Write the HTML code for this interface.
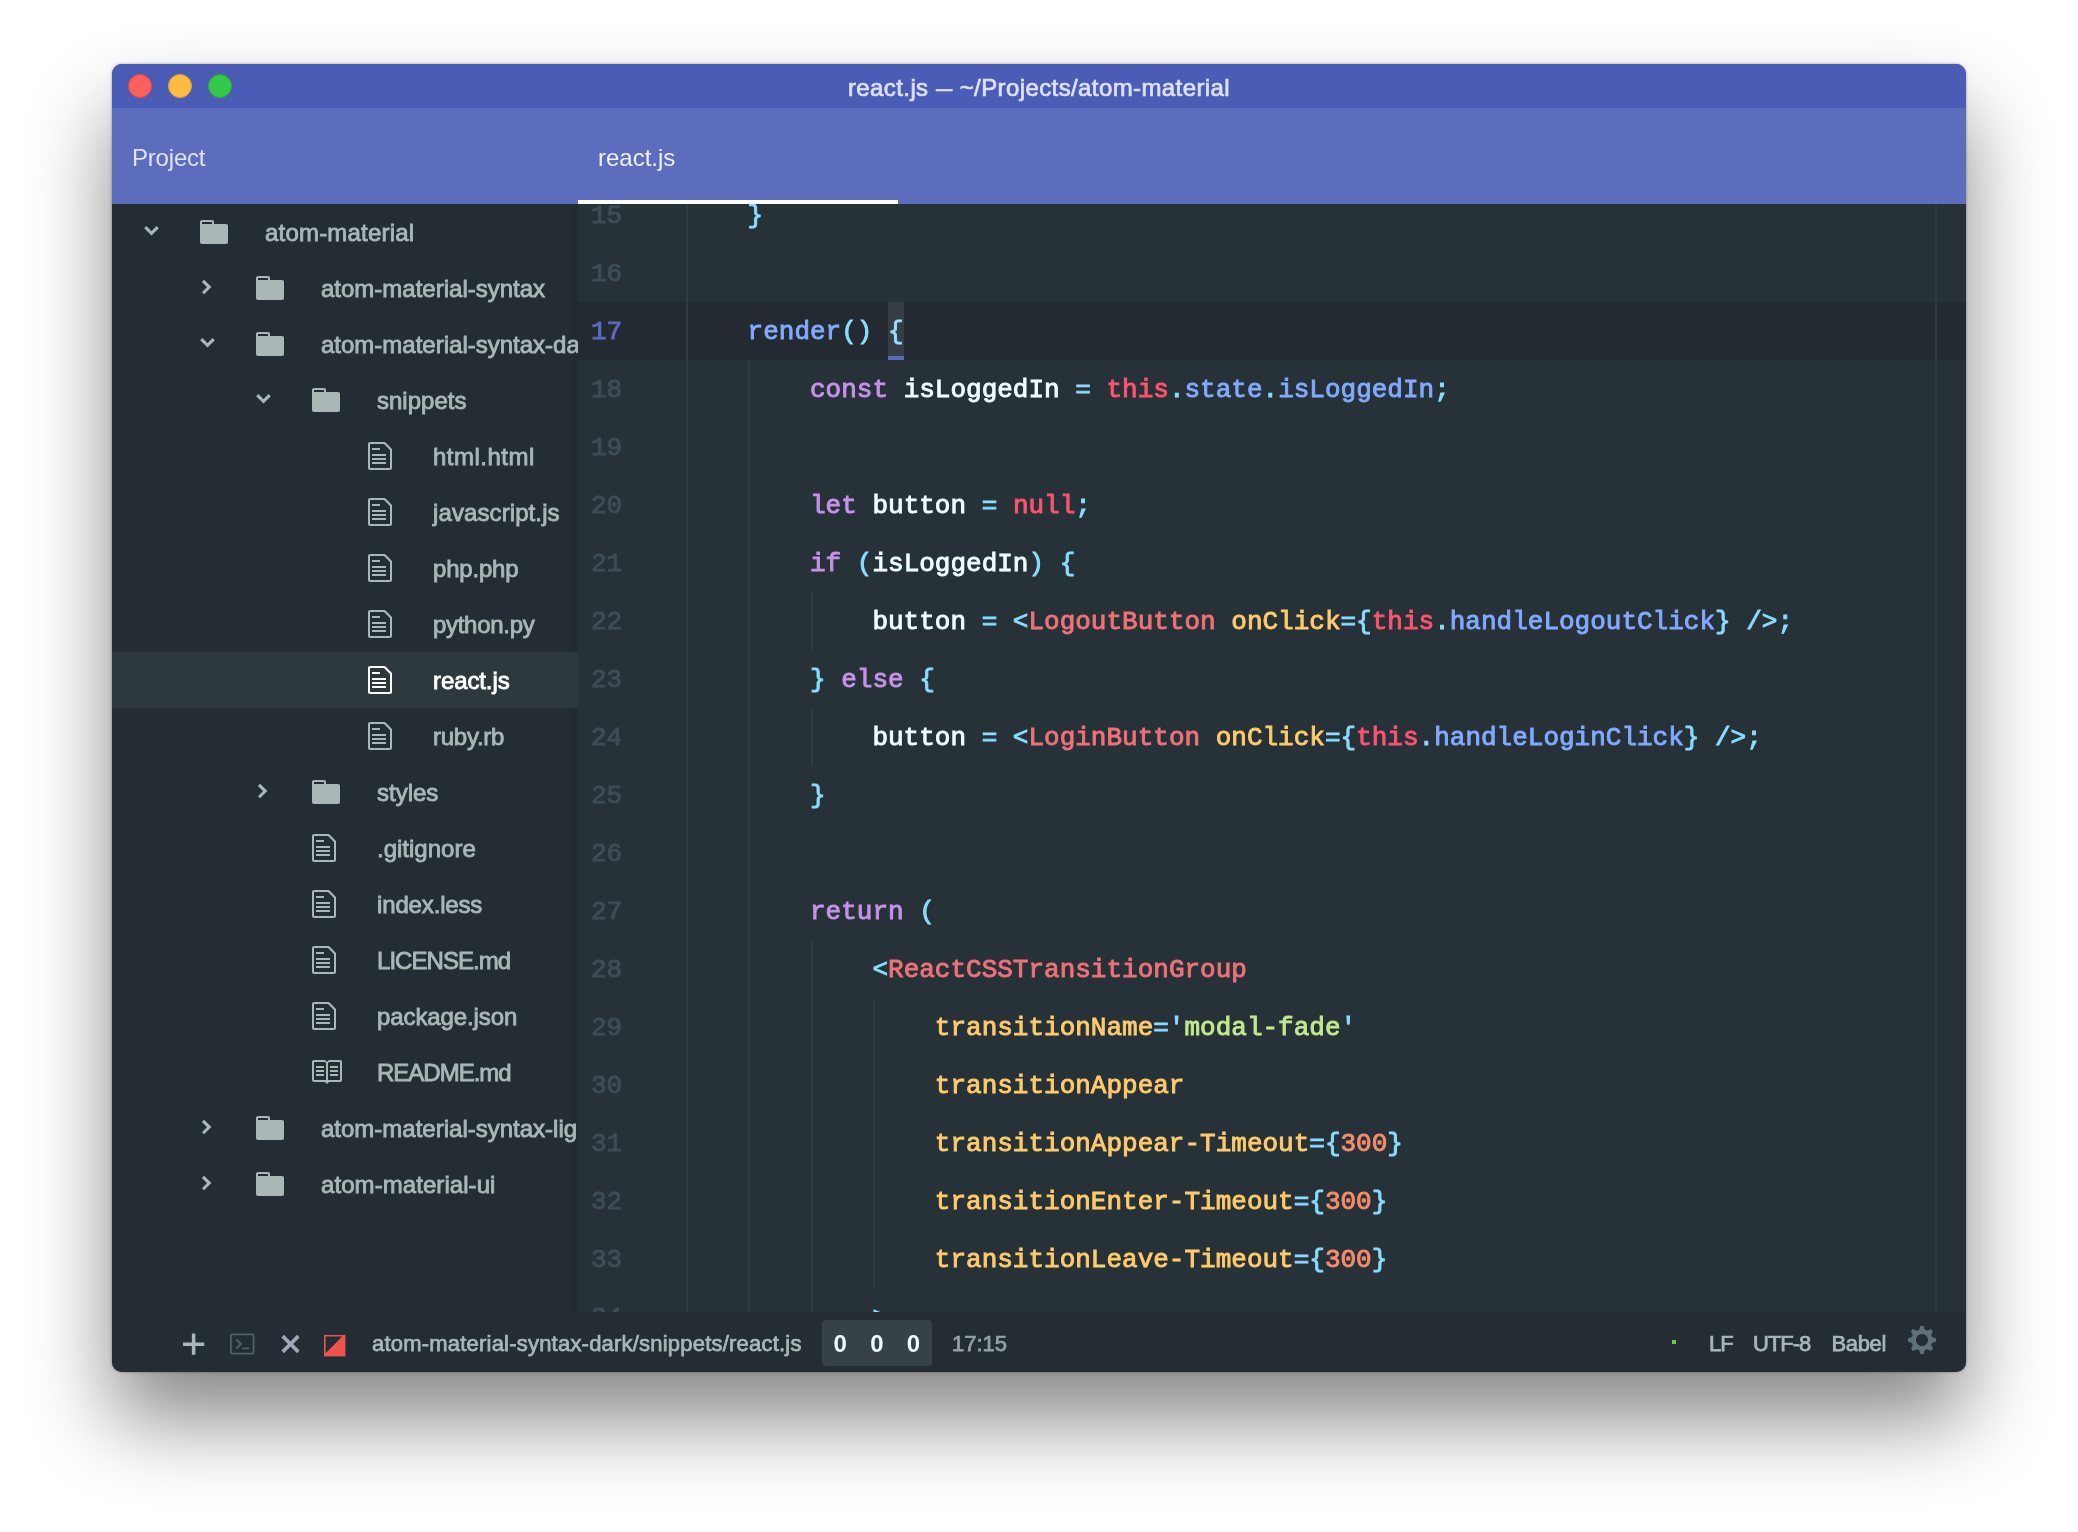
<!DOCTYPE html>
<html lang="en"><head><meta charset="utf-8"><title>react.js — ~/Projects/atom-material</title>
<style>

html,body{margin:0;padding:0;background:#fff;}
body{width:2078px;height:1532px;position:relative;overflow:hidden;font-family:"Liberation Sans",sans-serif;}
.shadow{position:absolute;left:112px;top:64px;width:1854px;height:1308px;border-radius:10px;
  box-shadow:0 0 3px rgba(0,0,0,.38),0 48px 84px rgba(0,0,0,.47);}
.win{position:absolute;left:112px;top:64px;width:1854px;height:1308px;border-radius:10px;overflow:hidden;background:#263238;will-change:transform;}
.ic{position:absolute;display:block;overflow:visible}
.abs{position:absolute;white-space:pre;}
.title{position:absolute;left:0;top:0;width:100%;height:44px;background:#4b5cb7;}
.title .t{position:absolute;left:0;width:100%;top:0;height:44px;line-height:48px;text-align:center;font-size:24px;color:#dde1f3;-webkit-text-stroke:.7px #dde1f3;letter-spacing:.4px}
.dot{position:absolute;top:10px;width:24px;height:24px;border-radius:50%;box-sizing:border-box}
.tabs{position:absolute;left:0;top:44px;width:100%;height:96px;background:#5d6dbe;}
.tabs .l{position:absolute;top:0;height:96px;line-height:100px;font-size:24px;}
.tabs .ul{position:absolute;left:466px;top:92px;width:320px;height:4px;background:#fff}
.tree{position:absolute;left:0;top:140px;width:466px;height:1108px;background:#232d33;overflow:hidden;}
.row{position:absolute;left:0;width:466px;height:56px;}
.row.sel{background:#2d393f;}
.row .n{position:absolute;top:0;height:56px;line-height:57px;font-size:24px;color:#a9b7b6;-webkit-text-stroke:.85px #a9b7b6;white-space:pre;letter-spacing:0px}
.row.sel .n{color:#fff;-webkit-text-stroke:.85px #fff}
.ed{position:absolute;left:466px;top:140px;width:1388px;height:1108px;background:#263238;overflow:hidden;}
.ln{position:absolute;left:0;width:1388px;height:58px;line-height:58px;font-family:"Liberation Mono",monospace;font-size:26px;white-space:pre;}
.ln.cur{background:#232a32;}
.ln .no{position:absolute;left:13px;top:1px;color:#3f4d56;-webkit-text-stroke:.9px}
.ln.cur .no{color:#5c6bc0}
.ln .cd{position:absolute;left:107.2px;top:1px;color:#eeffff;-webkit-text-stroke:.9px}
.g{position:absolute;width:2px;background:#2c3c44;}
.k{color:#c792ea} .p{color:#89ddff} .f{color:#82aaff} .r{color:#ff5370} .t{color:#f07178}
.a{color:#ffcb6b} .s{color:#c3e88d} .n{color:#f78c6c} .v{color:#eeffff}
.status{position:absolute;left:0;top:1248px;width:100%;height:60px;background:#232d33;}
.status .x{position:absolute;top:-2px;height:62px;line-height:67px;font-size:22px;color:#a9b7b6;-webkit-text-stroke:.75px #a9b7b6;white-space:pre}

</style></head><body>
<div class="shadow"></div>
<div class="win">
<div class="title">
<div class="dot" style="left:16px;background:#fc605c;border:1px solid #df4744"></div>
<div class="dot" style="left:56px;background:#fdbc40;border:1px solid #de9f34"></div>
<div class="dot" style="left:96px;background:#34c84a;border:1px solid #27aa35"></div>
<div class="t">react.js <span style="display:inline-block;width:17px;transform:scaleX(.68);transform-origin:0 50%">—</span> ~/Projects/atom-material</div>
</div>
<div class="tabs">
<div class="l" style="left:20px;color:#dfe2f2;letter-spacing:-.2px">Project</div>
<div class="l" style="left:486px;color:#eef0f9">react.js</div>
<div class="ul"></div>
</div>
<div class="tree">
<div class="abs" style="left:460px;top:0;width:6px;height:1108px;background:rgba(36,40,50,.55)"></div>
<div class="row" style="top:0px">
<svg class="ic" style="left:0;top:0" width="466" height="56"><polyline points="33.3,23.1 39.5,29.3 45.7,23.1" fill="none" stroke="#a9b7b6" stroke-width="3.1"/></svg>
<svg class="ic" style="left:88.00px;top:12.00px" width="28.00" height="32.00" viewBox="0 0 14 16"><path fill="#a9b7b6" fill-rule="evenodd" d="M13 4H7V3c0-.66-.31-1-1-1H1c-.55 0-1 .45-1 1v10c0 .55.45 1 1 1h12c.55 0 1-.45 1-1V5c0-.55-.45-1-1-1zM6 4H1V3h5v1z"/></svg>
<span class="n" style="left:153px;letter-spacing:0.2px">atom-material</span>
</div>
<div class="row" style="top:56px">
<svg class="ic" style="left:0;top:0" width="466" height="56"><polyline points="91.0,20.85 97.2,27.05 91.0,33.25" fill="none" stroke="#a9b7b6" stroke-width="3.1"/></svg>
<svg class="ic" style="left:144.00px;top:12.00px" width="28.00" height="32.00" viewBox="0 0 14 16"><path fill="#a9b7b6" fill-rule="evenodd" d="M13 4H7V3c0-.66-.31-1-1-1H1c-.55 0-1 .45-1 1v10c0 .55.45 1 1 1h12c.55 0 1-.45 1-1V5c0-.55-.45-1-1-1zM6 4H1V3h5v1z"/></svg>
<span class="n" style="left:209px;letter-spacing:0px">atom-material-syntax</span>
</div>
<div class="row" style="top:112px">
<svg class="ic" style="left:0;top:0" width="466" height="56"><polyline points="89.3,23.1 95.5,29.3 101.7,23.1" fill="none" stroke="#a9b7b6" stroke-width="3.1"/></svg>
<svg class="ic" style="left:144.00px;top:12.00px" width="28.00" height="32.00" viewBox="0 0 14 16"><path fill="#a9b7b6" fill-rule="evenodd" d="M13 4H7V3c0-.66-.31-1-1-1H1c-.55 0-1 .45-1 1v10c0 .55.45 1 1 1h12c.55 0 1-.45 1-1V5c0-.55-.45-1-1-1zM6 4H1V3h5v1z"/></svg>
<span class="n" style="left:209px;letter-spacing:0px">atom-material-syntax-dark</span>
</div>
<div class="row" style="top:168px">
<svg class="ic" style="left:0;top:0" width="466" height="56"><polyline points="145.3,23.1 151.5,29.3 157.7,23.1" fill="none" stroke="#a9b7b6" stroke-width="3.1"/></svg>
<svg class="ic" style="left:200.00px;top:12.00px" width="28.00" height="32.00" viewBox="0 0 14 16"><path fill="#a9b7b6" fill-rule="evenodd" d="M13 4H7V3c0-.66-.31-1-1-1H1c-.55 0-1 .45-1 1v10c0 .55.45 1 1 1h12c.55 0 1-.45 1-1V5c0-.55-.45-1-1-1zM6 4H1V3h5v1z"/></svg>
<span class="n" style="left:265px;letter-spacing:0px">snippets</span>
</div>
<div class="row" style="top:224px">
<svg class="ic" style="left:256.00px;top:12.00px" width="24.00" height="32.00" viewBox="0 0 12 16"><path fill="#a9b7b6" fill-rule="evenodd" d="M6 5H2V4h4v1zM2 8h7V7H2v1zm0 2h7V9H2v1zm0 2h7v-1H2v1zm10-7.5V14c0 .55-.45 1-1 1H1c-.55 0-1-.45-1-1V2c0-.55.45-1 1-1h7.5L12 4.5zM11 5L8 2H1v12h10V5z"/></svg>
<span class="n" style="left:321px;letter-spacing:0.5px">html.html</span>
</div>
<div class="row" style="top:280px">
<svg class="ic" style="left:256.00px;top:12.00px" width="24.00" height="32.00" viewBox="0 0 12 16"><path fill="#a9b7b6" fill-rule="evenodd" d="M6 5H2V4h4v1zM2 8h7V7H2v1zm0 2h7V9H2v1zm0 2h7v-1H2v1zm10-7.5V14c0 .55-.45 1-1 1H1c-.55 0-1-.45-1-1V2c0-.55.45-1 1-1h7.5L12 4.5zM11 5L8 2H1v12h10V5z"/></svg>
<span class="n" style="left:321px;letter-spacing:0.1px">javascript.js</span>
</div>
<div class="row" style="top:336px">
<svg class="ic" style="left:256.00px;top:12.00px" width="24.00" height="32.00" viewBox="0 0 12 16"><path fill="#a9b7b6" fill-rule="evenodd" d="M6 5H2V4h4v1zM2 8h7V7H2v1zm0 2h7V9H2v1zm0 2h7v-1H2v1zm10-7.5V14c0 .55-.45 1-1 1H1c-.55 0-1-.45-1-1V2c0-.55.45-1 1-1h7.5L12 4.5zM11 5L8 2H1v12h10V5z"/></svg>
<span class="n" style="left:321px;letter-spacing:-0.2px">php.php</span>
</div>
<div class="row" style="top:392px">
<svg class="ic" style="left:256.00px;top:12.00px" width="24.00" height="32.00" viewBox="0 0 12 16"><path fill="#a9b7b6" fill-rule="evenodd" d="M6 5H2V4h4v1zM2 8h7V7H2v1zm0 2h7V9H2v1zm0 2h7v-1H2v1zm10-7.5V14c0 .55-.45 1-1 1H1c-.55 0-1-.45-1-1V2c0-.55.45-1 1-1h7.5L12 4.5zM11 5L8 2H1v12h10V5z"/></svg>
<span class="n" style="left:321px;letter-spacing:-0.3px">python.py</span>
</div>
<div class="row sel" style="top:448px">
<svg class="ic" style="left:256.00px;top:12.00px" width="24.00" height="32.00" viewBox="0 0 12 16"><path fill="#ffffff" fill-rule="evenodd" d="M6 5H2V4h4v1zM2 8h7V7H2v1zm0 2h7V9H2v1zm0 2h7v-1H2v1zm10-7.5V14c0 .55-.45 1-1 1H1c-.55 0-1-.45-1-1V2c0-.55.45-1 1-1h7.5L12 4.5zM11 5L8 2H1v12h10V5z"/></svg>
<span class="n" style="left:321px;letter-spacing:-0.1px">react.js</span>
</div>
<div class="row" style="top:504px">
<svg class="ic" style="left:256.00px;top:12.00px" width="24.00" height="32.00" viewBox="0 0 12 16"><path fill="#a9b7b6" fill-rule="evenodd" d="M6 5H2V4h4v1zM2 8h7V7H2v1zm0 2h7V9H2v1zm0 2h7v-1H2v1zm10-7.5V14c0 .55-.45 1-1 1H1c-.55 0-1-.45-1-1V2c0-.55.45-1 1-1h7.5L12 4.5zM11 5L8 2H1v12h10V5z"/></svg>
<span class="n" style="left:321px;letter-spacing:-0.25px">ruby.rb</span>
</div>
<div class="row" style="top:560px">
<svg class="ic" style="left:0;top:0" width="466" height="56"><polyline points="147.0,20.85 153.2,27.05 147.0,33.25" fill="none" stroke="#a9b7b6" stroke-width="3.1"/></svg>
<svg class="ic" style="left:200.00px;top:12.00px" width="28.00" height="32.00" viewBox="0 0 14 16"><path fill="#a9b7b6" fill-rule="evenodd" d="M13 4H7V3c0-.66-.31-1-1-1H1c-.55 0-1 .45-1 1v10c0 .55.45 1 1 1h12c.55 0 1-.45 1-1V5c0-.55-.45-1-1-1zM6 4H1V3h5v1z"/></svg>
<span class="n" style="left:265px;letter-spacing:0px">styles</span>
</div>
<div class="row" style="top:616px">
<svg class="ic" style="left:200.00px;top:12.00px" width="24.00" height="32.00" viewBox="0 0 12 16"><path fill="#a9b7b6" fill-rule="evenodd" d="M6 5H2V4h4v1zM2 8h7V7H2v1zm0 2h7V9H2v1zm0 2h7v-1H2v1zm10-7.5V14c0 .55-.45 1-1 1H1c-.55 0-1-.45-1-1V2c0-.55.45-1 1-1h7.5L12 4.5zM11 5L8 2H1v12h10V5z"/></svg>
<span class="n" style="left:265px;letter-spacing:0px">.gitignore</span>
</div>
<div class="row" style="top:672px">
<svg class="ic" style="left:200.00px;top:12.00px" width="24.00" height="32.00" viewBox="0 0 12 16"><path fill="#a9b7b6" fill-rule="evenodd" d="M6 5H2V4h4v1zM2 8h7V7H2v1zm0 2h7V9H2v1zm0 2h7v-1H2v1zm10-7.5V14c0 .55-.45 1-1 1H1c-.55 0-1-.45-1-1V2c0-.55.45-1 1-1h7.5L12 4.5zM11 5L8 2H1v12h10V5z"/></svg>
<span class="n" style="left:265px;letter-spacing:-0.15px">index.less</span>
</div>
<div class="row" style="top:728px">
<svg class="ic" style="left:200.00px;top:12.00px" width="24.00" height="32.00" viewBox="0 0 12 16"><path fill="#a9b7b6" fill-rule="evenodd" d="M6 5H2V4h4v1zM2 8h7V7H2v1zm0 2h7V9H2v1zm0 2h7v-1H2v1zm10-7.5V14c0 .55-.45 1-1 1H1c-.55 0-1-.45-1-1V2c0-.55.45-1 1-1h7.5L12 4.5zM11 5L8 2H1v12h10V5z"/></svg>
<span class="n" style="left:265px;letter-spacing:-0.95px">LICENSE.md</span>
</div>
<div class="row" style="top:784px">
<svg class="ic" style="left:200.00px;top:12.00px" width="24.00" height="32.00" viewBox="0 0 12 16"><path fill="#a9b7b6" fill-rule="evenodd" d="M6 5H2V4h4v1zM2 8h7V7H2v1zm0 2h7V9H2v1zm0 2h7v-1H2v1zm10-7.5V14c0 .55-.45 1-1 1H1c-.55 0-1-.45-1-1V2c0-.55.45-1 1-1h7.5L12 4.5zM11 5L8 2H1v12h10V5z"/></svg>
<span class="n" style="left:265px;letter-spacing:-0.1px">package.json</span>
</div>
<div class="row" style="top:840px">
<svg class="ic" style="left:198.00px;top:12.00px" width="32.00" height="32.00" viewBox="0 0 16 16"><path fill="#a9b7b6" fill-rule="evenodd" d="M3 5h4v1H3V5zm0 3h4V7H3v1zm0 2h4V9H3v1zm11-5h-4v1h4V5zm0 2h-4v1h4V7zm0 2h-4v1h4V9zm2-6v9c0 .55-.45 1-1 1H9.5l-1 1-1-1H2c-.55 0-1-.45-1-1V3c0-.55.45-1 1-1h5.5l1 1 1-1H15c.55 0 1 .45 1 1zm-8 .5L7.5 3H2v9h6V3.5zm7-.5H9.5l-.5.5V12h6V3z"/></svg>
<span class="n" style="left:265px;letter-spacing:-1.0px">README.md</span>
</div>
<div class="row" style="top:896px">
<svg class="ic" style="left:0;top:0" width="466" height="56"><polyline points="91.0,20.85 97.2,27.05 91.0,33.25" fill="none" stroke="#a9b7b6" stroke-width="3.1"/></svg>
<svg class="ic" style="left:144.00px;top:12.00px" width="28.00" height="32.00" viewBox="0 0 14 16"><path fill="#a9b7b6" fill-rule="evenodd" d="M13 4H7V3c0-.66-.31-1-1-1H1c-.55 0-1 .45-1 1v10c0 .55.45 1 1 1h12c.55 0 1-.45 1-1V5c0-.55-.45-1-1-1zM6 4H1V3h5v1z"/></svg>
<span class="n" style="left:209px;letter-spacing:0px">atom-material-syntax-light</span>
</div>
<div class="row" style="top:952px">
<svg class="ic" style="left:0;top:0" width="466" height="56"><polyline points="91.0,20.85 97.2,27.05 91.0,33.25" fill="none" stroke="#a9b7b6" stroke-width="3.1"/></svg>
<svg class="ic" style="left:144.00px;top:12.00px" width="28.00" height="32.00" viewBox="0 0 14 16"><path fill="#a9b7b6" fill-rule="evenodd" d="M13 4H7V3c0-.66-.31-1-1-1H1c-.55 0-1 .45-1 1v10c0 .55.45 1 1 1h12c.55 0 1-.45 1-1V5c0-.55-.45-1-1-1zM6 4H1V3h5v1z"/></svg>
<span class="n" style="left:209px;letter-spacing:0.07px">atom-material-ui</span>
</div>
</div>
<div class="ed">
<div class="ln" style="top:-18px"><span class="no">15</span><span class="cd"><span class="p">    }</span></span></div>
<div class="ln" style="top:40px"><span class="no">16</span><span class="cd"></span></div>
<div class="ln cur" style="top:98px"><span class="no">17</span><span class="cd"><span class="f">    render</span><span class="p">() {</span></span></div>
<div class="ln" style="top:156px"><span class="no">18</span><span class="cd"><span class="k">        const</span><span class="v"> isLoggedIn </span><span class="p">=</span><span class="v"> </span><span class="r">this</span><span class="p">.</span><span class="f">state</span><span class="p">.</span><span class="f">isLoggedIn</span><span class="p">;</span></span></div>
<div class="ln" style="top:214px"><span class="no">19</span><span class="cd"></span></div>
<div class="ln" style="top:272px"><span class="no">20</span><span class="cd"><span class="k">        let</span><span class="v"> button </span><span class="p">=</span><span class="v"> </span><span class="r">null</span><span class="p">;</span></span></div>
<div class="ln" style="top:330px"><span class="no">21</span><span class="cd"><span class="k">        if</span><span class="v"> </span><span class="p">(</span><span class="v">isLoggedIn</span><span class="p">) {</span></span></div>
<div class="ln" style="top:388px"><span class="no">22</span><span class="cd"><span class="v">            button </span><span class="p">= &lt;</span><span class="t">LogoutButton</span><span class="v"> </span><span class="a">onClick</span><span class="p">={</span><span class="r">this</span><span class="p">.</span><span class="f">handleLogoutClick</span><span class="p">} /&gt;;</span></span></div>
<div class="ln" style="top:446px"><span class="no">23</span><span class="cd"><span class="p">        } </span><span class="k">else</span><span class="p"> {</span></span></div>
<div class="ln" style="top:504px"><span class="no">24</span><span class="cd"><span class="v">            button </span><span class="p">= &lt;</span><span class="t">LoginButton</span><span class="v"> </span><span class="a">onClick</span><span class="p">={</span><span class="r">this</span><span class="p">.</span><span class="f">handleLoginClick</span><span class="p">} /&gt;;</span></span></div>
<div class="ln" style="top:562px"><span class="no">25</span><span class="cd"><span class="p">        }</span></span></div>
<div class="ln" style="top:620px"><span class="no">26</span><span class="cd"></span></div>
<div class="ln" style="top:678px"><span class="no">27</span><span class="cd"><span class="k">        return</span><span class="p"> (</span></span></div>
<div class="ln" style="top:736px"><span class="no">28</span><span class="cd"><span class="p">            &lt;</span><span class="t">ReactCSSTransitionGroup</span></span></div>
<div class="ln" style="top:794px"><span class="no">29</span><span class="cd"><span class="a">                transitionName</span><span class="p">=&#x27;</span><span class="s">modal-fade</span><span class="p">&#x27;</span></span></div>
<div class="ln" style="top:852px"><span class="no">30</span><span class="cd"><span class="a">                transitionAppear</span></span></div>
<div class="ln" style="top:910px"><span class="no">31</span><span class="cd"><span class="a">                transitionAppear-Timeout</span><span class="p">={</span><span class="n">300</span><span class="p">}</span></span></div>
<div class="ln" style="top:968px"><span class="no">32</span><span class="cd"><span class="a">                transitionEnter-Timeout</span><span class="p">={</span><span class="n">300</span><span class="p">}</span></span></div>
<div class="ln" style="top:1026px"><span class="no">33</span><span class="cd"><span class="a">                transitionLeave-Timeout</span><span class="p">={</span><span class="n">300</span><span class="p">}</span></span></div>
<div class="ln" style="top:1084px"><span class="no">34</span><span class="cd"><span class="p">            &gt;</span></span></div>
<div class="abs" style="left:310.0px;top:98px;width:16px;height:54px;background:rgba(255,255,255,.09);border-bottom:4px solid #5c6bc0;pointer-events:none"></div>
<div class="g" style="left:108.0px;top:-18px;height:1160px"></div>
<div class="g" style="left:170.4px;top:156px;height:986px"></div>
<div class="g" style="left:232.8px;top:388px;height:58px"></div>
<div class="g" style="left:232.8px;top:504px;height:58px"></div>
<div class="g" style="left:232.8px;top:736px;height:406px"></div>
<div class="g" style="left:295.2px;top:794px;height:290px"></div>
<div class="g" style="left:1356.5px;top:0;height:1108px;background:#2c3a42"></div>
</div>
<div class="status">
<svg class="ic" style="left:71.40px;top:17.66px" width="21.24" height="28.32" viewBox="0 0 12 16"><path fill="#a9b7b6" fill-rule="evenodd" d="M12 9H7v5H5V9H0V7h5V2h2v5h5z"/></svg>
<svg class="ic" style="left:117.80px;top:17.60px" width="24.50" height="28.00" viewBox="0 0 14 16"><path fill="#536168" fill-rule="evenodd" d="M7 10h4v1H7v-1zm-3 1l3-3-3-3-.75.75L5.5 8l-2.25 2.25L4 11zm10-8v10c0 .55-.45 1-1 1H1c-.55 0-1-.45-1-1V3c0-.55.45-1 1-1h12c.55 0 1 .45 1 1zm-1 0H1v10h12V3z"/></svg>
<svg class="ic" style="left:167.55px;top:17.75px" width="21.00" height="28.00" viewBox="0 0 12 16"><path fill="#a0a8b8" fill-rule="evenodd" d="M7.48 8l3.75 3.75-1.48 1.48L6 9.48l-3.75 3.75-1.48-1.48L4.52 8 .77 4.25l1.48-1.48L6 6.52l3.75-3.75 1.48 1.48z"/></svg>
<svg class="ic" style="left:212px;top:22.799999999999955px" width="21.4" height="21.4" viewBox="0 0 21.4 21.4"><rect width="21.4" height="21.4" fill="#ef5350"/><path d="M1.6 1.6H18.2L1.6 18.2z" fill="#232d33"/></svg>
<span class="x" style="left:260px;letter-spacing:.21px">atom-material-syntax-dark/snippets/react.js</span>
<div class="abs" style="left:710px;top:8px;width:110px;height:46px;border-radius:4px;background:#374248"></div>
<span class="x" style="left:708.3px;width:40px;text-align:center;color:#eeffff;font-weight:bold;font-size:24px;-webkit-text-stroke:0">0</span>
<span class="x" style="left:745px;width:40px;text-align:center;color:#eeffff;font-weight:bold;font-size:24px;-webkit-text-stroke:0">0</span>
<span class="x" style="left:781.4px;width:40px;text-align:center;color:#eeffff;font-weight:bold;font-size:24px;-webkit-text-stroke:0">0</span>
<span class="x" style="left:840px;color:#93a1a1;-webkit-text-stroke:.75px #93a1a1">17:15</span>
<div class="abs" style="left:1560px;top:28px;width:4px;height:4px;background:#6ec83c"></div>
<span class="x" style="left:1597px;letter-spacing:-1px">LF</span>
<span class="x" style="left:1641px;letter-spacing:-1px">UTF-8</span>
<span class="x" style="left:1719.5px;letter-spacing:-.35px">Babel</span>
<svg class="ic" style="left:1796.00px;top:12.00px" width="28.00" height="32.00" viewBox="0 0 14 16"><path fill="#607078" fill-rule="evenodd" d="M14 8.77v-1.6l-1.94-.64-.45-1.09.88-1.84-1.13-1.13-1.81.91-1.09-.45-.69-1.92h-1.6l-.63 1.94-1.11.45-1.84-.88-1.13 1.13.91 1.81-.45 1.09L0 7.23v1.59l1.94.64.45 1.09-.88 1.84 1.13 1.13 1.81-.91 1.09.45.69 1.92h1.59l.63-1.94 1.11-.45 1.84.88 1.13-1.13-.92-1.81.47-1.09L14 8.75v.02zM7 11c-1.66 0-3-1.34-3-3s1.340-3 3-3 3 1.340 3 3-1.340 3-3 3z"/></svg>
</div>
</div>
</body></html>
